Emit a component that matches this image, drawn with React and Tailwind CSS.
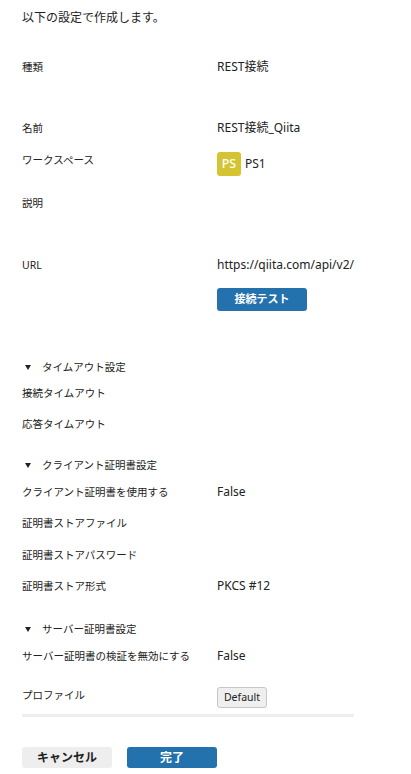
const Row = ({ label, children, className = '' }) => (
  <div className={`flex items-start ${className}`}>
    <div className="w-[195px] shrink-0 text-[10.5px] leading-4 text-[#222]">{label}</div>
    <div className="text-[12px] leading-4 text-[#222]">{children}</div>
  </div>
);

const SectionHeader = ({ title, className = '' }) => (
  <div className={`flex items-center text-[10.5px] leading-4 text-[#222] ${className}`}>
    <svg width="6" height="5" viewBox="0 0 6 5" className="ml-[3px] mr-[11px]">
      <path d="M0 0 L6 0 L3 5 Z" fill="#222" />
    </svg>
    <span>{title}</span>
  </div>
);

export default function App() {
  return (
    <div
      className="min-h-[774px] bg-white pl-[22px] pt-[10px]"
      style={{ fontFamily: '"Noto Sans", "Noto Sans CJK JP", sans-serif' }}
    >
      <p className="text-[12px] leading-4 text-[#222]">以下の設定で作成します。</p>

      <Row label="種類" className="mt-[33px]">REST接続</Row>
      <Row label="名前" className="mt-[45px]">REST接続_Qiita</Row>

      <div className="mt-[16px] flex items-start">
        <div className="w-[195px] shrink-0 text-[10.5px] leading-4 text-[#222]">ワークスペース</div>
        <div className="flex items-center gap-[4px]">
          <span className="flex h-[24px] w-[24px] items-center justify-center rounded-[3px] bg-[#d4c431] text-[12.5px] font-medium text-white">
            PS
          </span>
          <span className="text-[12px] text-[#222]">PS1</span>
        </div>
      </div>

      <Row label="説明" className="mt-[19px]" />

      <Row label="URL" className="mt-[46px]">https://qiita.com/api/v2/</Row>
      <div className="mt-[15px] pl-[195px]">
        <button className="flex h-[23px] w-[90px] items-center justify-center rounded-[3px] bg-[#2371ad] text-[11px] font-bold text-white">
          接続テスト
        </button>
      </div>

      <SectionHeader title="タイムアウト設定" className="mt-[48px]" />
      <Row label="接続タイムアウト" className="mt-[10px]" />
      <Row label="応答タイムアウト" className="mt-[15px]" />

      <SectionHeader title="クライアント証明書設定" className="mt-[25px]" />
      <Row label="クライアント証明書を使用する" className="mt-[11px]">False</Row>
      <Row label="証明書ストアファイル" className="mt-[15px]" />
      <Row label="証明書ストアパスワード" className="mt-[16px]" />
      <Row label="証明書ストア形式" className="mt-[15px]">PKCS #12</Row>

      <SectionHeader title="サーバー証明書設定" className="mt-[27px]" />
      <Row label="サーバー証明書の検証を無効にする" className="mt-[11px]">False</Row>

      <div className="mt-[23px] flex items-start">
        <div className="w-[195px] shrink-0 text-[10.5px] leading-4 text-[#222]">プロファイル</div>
        <button className="flex h-[21px] w-[50px] items-center justify-center rounded-[3px] border border-[#c6c6c6] bg-[#efefef] text-[10.5px] text-[#222]">
          Default
        </button>
      </div>

      <div className="mt-[6px] h-[3px] w-[332px] bg-[#eeeeee]" />

      <div className="mt-[30px] flex gap-[15px]">
        <button className="flex h-[21px] w-[90px] items-center justify-center rounded-[3px] bg-[#eeeeee] text-[12px] font-bold text-[#222]">
          キャンセル
        </button>
        <button className="flex h-[21px] w-[90px] items-center justify-center rounded-[3px] bg-[#2371ad] text-[12px] font-bold text-white">
          完了
        </button>
      </div>
    </div>
  );
}
